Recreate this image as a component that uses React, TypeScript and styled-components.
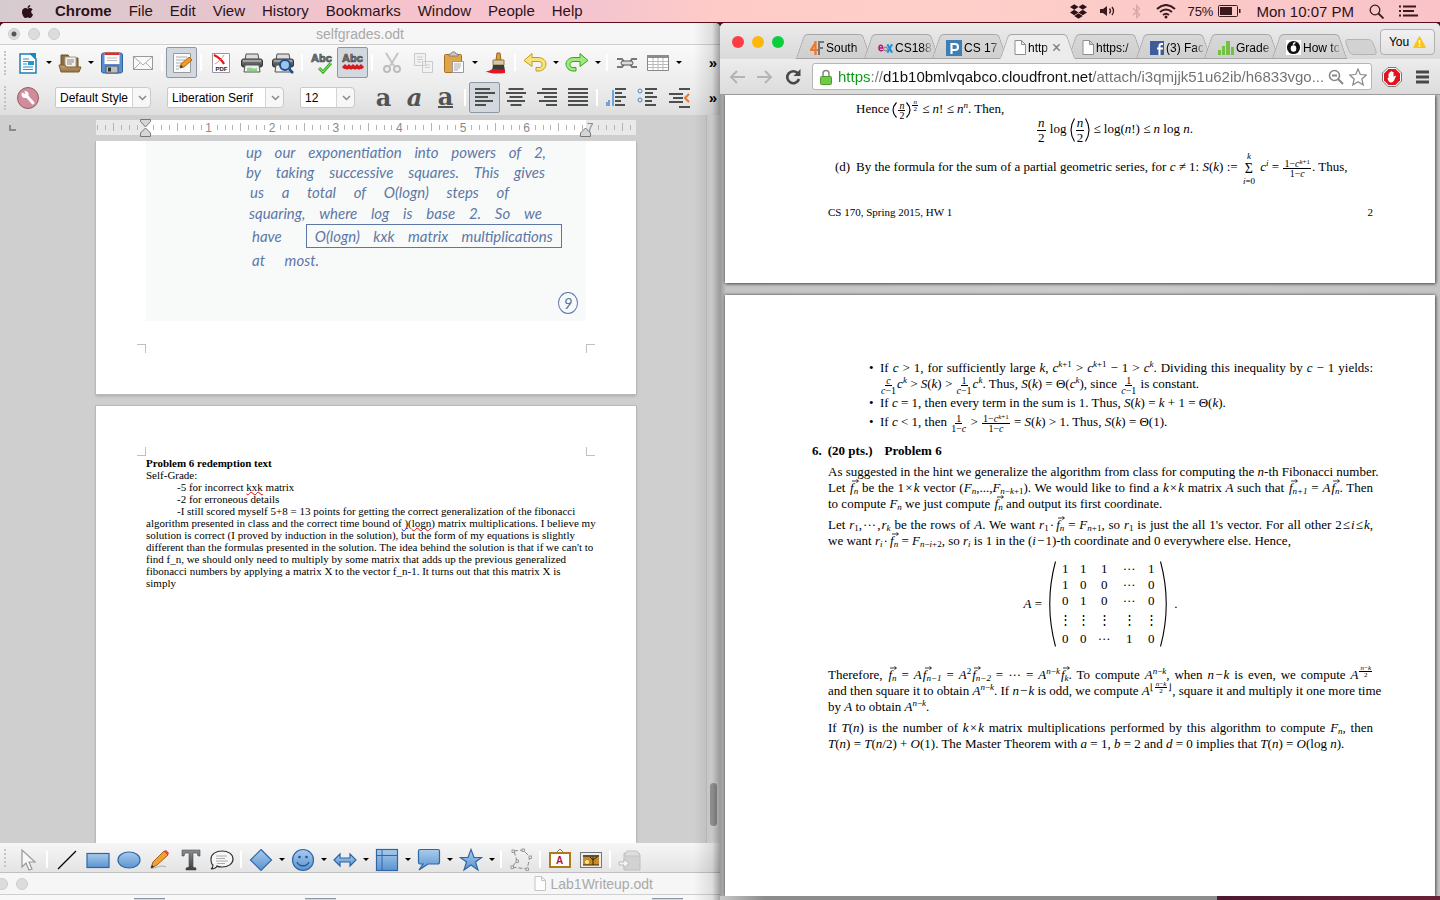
import React from "react";
import styled, { createGlobalStyle, css } from "styled-components";
import { FaApple, FaDropbox, FaBluetoothB } from "react-icons/fa";

const Global = createGlobalStyle`
  * { box-sizing: border-box; }
  html, body { margin: 0; padding: 0; }
  body { font-family: "Liberation Sans", Arial, sans-serif; color: #000; background: #4a1830; }
  button, select, input { font: inherit; color: inherit; margin: 0; padding: 0; }
  h2, p, ul { margin: 0; padding: 0; font: inherit; }
`;

const Desktop = styled.div`
  height: 100vh;
  display: flex;
  flex-direction: column;
  overflow: hidden;
  background: #4a1020;
`;

/* ---------- system menu bar ---------- */

const MenuBar = styled.header`
  height: 23px;
  flex: none;
  display: flex;
  align-items: center;
  padding: 0 22px 0 20px;
  border-bottom: 1px solid #5a0f1c;
  background: linear-gradient(90deg, #d6ccd0 0, #e2c6cd 12%, #f6c3cd 25%, #f5c5cf 42%, #ffcbc7 50%, #fecfc9 66%, #f9c3c8 100%);
  color: #2c1218;
  font-size: 15px;
`;
const MenuGroup = styled.nav`
  display: flex;
  align-items: center;
  gap: 17px;
  margin-left: 20px;
  flex: 1;
`;
const MenuItem = styled.button<{ $bold?: boolean }>`
  border: 0;
  background: none;
  line-height: 22px;
  white-space: nowrap;
  font-weight: ${(p) => (p.$bold ? 700 : 400)};
`;
const StatusGroup = styled.div<{ $tight?: boolean }>`
  display: flex;
  align-items: center;
  gap: ${(p) => (p.$tight ? 12 : 15)}px;
  white-space: nowrap;
`;
const Battery = styled.span`
  display: flex;
  align-items: center;
  gap: 5px;
  margin-left: -4px;
  font-size: 13px;
`;

const Windows = styled.main`
  flex: 1;
  min-height: 0;
  display: grid;
  grid-template-columns: 1fr 1fr;
`;

/* ---------- writer window ---------- */

const Writer = styled.section`
  position: relative;
  min-width: 0;
  display: flex;
  flex-direction: column;
  overflow: hidden;
  background: #cfcfcf;
  border-radius: 5px 5px 0 0;
  &::after {
    content: "";
    position: absolute;
    top: 0; right: 0; bottom: 0;
    width: 26px;
    pointer-events: none;
    background: linear-gradient(90deg, rgba(0,0,0,0), rgba(0,0,0,.1) 70%, rgba(0,0,0,.35));
  }
`;
const TitleBar = styled.div<{ $end?: boolean }>`
  height: 22px;
  flex: none;
  position: relative;
  display: flex;
  align-items: center;
  justify-content: ${(p) => (p.$end ? "flex-end" : "center")};
  padding-right: ${(p) => (p.$end ? 67 : 0)}px;
  gap: 5px;
  background: #f6f6f6;
  border-bottom: 1px solid #cfcfcf;
  color: #a9a9a9;
  font-size: 14px;
`;
const Lights = styled.div<{ $shift?: boolean }>`
  position: absolute;
  left: ${(p) => (p.$shift ? -24 : 8)}px;
  top: 5px;
  display: flex;
  gap: 8px;
`;
const Dim = styled.button<{ $dot?: boolean }>`
  width: 12px;
  height: 12px;
  border-radius: 50%;
  border: 1px solid #cdcdcd;
  background: ${(p) => (p.$dot ? "radial-gradient(circle, #555 0 2px, #dcdcdc 3px)" : "#dcdcdc")};
`;
const Toolbars = styled.div`
  flex: none;
  background: linear-gradient(#f9f9f9, #ececec 60%, #dedede);
`;
const Toolbar = styled.div<{ $bottom?: boolean }>`
  position: relative;
  height: ${(p) => (p.$bottom ? 30 : 35)}px;
  flex: none;
  display: flex;
  align-items: center;
  padding-left: 12px;
  ${(p) => p.$bottom && css`padding-top: 4px; background: linear-gradient(#f6f6f6, #e4e4e4); border-bottom: 1px solid #c0c0c0;`}
  &::before {
    content: "";
    position: absolute;
    left: 4px; top: 6px; bottom: 5px;
    border-left: 2px dotted #c4c4c4;
  }
`;
const ToolButton = styled.button<{ $on?: boolean }>`
  width: 31px;
  height: 31px;
  flex: none;
  display: grid;
  place-items: center;
  border: 1px solid ${(p) => (p.$on ? "#8d96a3" : "transparent")};
  border-radius: 2px;
  background: ${(p) => (p.$on ? "#d3d8de" : "none")};
  svg { display: block; }
`;
const Drop = styled.button`
  width: 11px;
  flex: none;
  display: grid;
  place-items: center;
  border: 0;
  background: none;
  &::before {
    content: "";
    border: 3px solid transparent;
    border-top-color: #000;
    border-bottom: 0;
  }
`;
const Sep = styled.span`
  flex: none;
  width: 2px;
  height: 17px;
  margin: 0 3px;
  background: #fff;
`;
const More = styled.button`
  margin-left: auto;
  margin-right: 3px;
  border: 0;
  background: none;
  font-size: 15px;
  line-height: 20px;
  font-weight: 700;
`;
const Picker = styled.span<{ $w: number; $gap: number }>`
  position: relative;
  flex: none;
  width: ${(p) => p.$w}px;
  margin-left: ${(p) => p.$gap}px;
  select {
    width: 100%;
    height: 21px;
    padding: 0 18px 0 4px;
    appearance: none;
    border: 1px solid #c9c9c9;
    border-radius: 2px 4px 4px 2px;
    background: linear-gradient(90deg, #fff calc(100% - 18px), #d4d4d4 calc(100% - 18px) calc(100% - 17px), #f7f7f7 calc(100% - 17px));
    font-size: 12px;
  }
  svg { position: absolute; right: 4px; top: 8px; pointer-events: none; }
`;
const FormatTools = styled.div`
  display: flex;
  align-items: center;
  margin-left: 13px;
`;
const Glyph = styled.span<{ $kind: "b" | "i" | "u" }>`
  font-family: "DejaVu Serif", serif;
  font-weight: 700;
  font-size: 24px;
  line-height: 18px;
  color: #505455;
  font-style: ${(p) => (p.$kind === "i" ? "italic" : "normal")};
  border-bottom: ${(p) => (p.$kind === "u" ? "2px solid #505455" : "0")};
`;
const DocArea = styled.div`
  flex: 1;
  min-height: 0;
  display: grid;
  grid-template-columns: 1fr 14px;
`;
const DocMain = styled.div`
  min-width: 0;
  display: flex;
  flex-direction: column;
  overflow: hidden;
`;
const RulerRow = styled.div`
  display: flex;
  flex: none;
  height: 26px;
  padding: 4px 0 0 9px;
  svg { flex: none; }
`;
const Pages = styled.div`
  flex: 1;
  min-height: 0;
  display: flex;
  flex-direction: column;
  gap: 12px;
  padding: 0 70px 0 96px;
  overflow: hidden;
`;
const Sheet = styled.article<{ $rest?: boolean }>`
  padding: 0 50px;
  background: #fff;
  box-shadow: 0 0 0 1px #b9b9b9, 0 2px 3px #a5a5a5;
  ${(p) => p.$rest ? css`flex: 1;` : css`flex: none;`}
`;
const Scan = styled.div`
  height: 180px;
  padding: 1px 23px 0 100px;
  background: #f8faf9;
  color: #5d77a6;
  font-family: Lato, sans-serif;
  font-style: italic;
  font-size: 15px;
`;
const Hand = styled.p<{ $w: number; $x?: number; $h?: number }>`
  display: flex;
  justify-content: space-between;
  width: ${(p) => p.$w}px;
  margin-left: ${(p) => p.$x || 0}px;
  line-height: ${(p) => p.$h || 21}px;
  white-space: nowrap;
`;
const HandRow = styled.div`
  display: flex;
  align-items: center;
  margin: 0 0 0 6px;
  gap: 24px;
  line-height: 20px;
`;
const Boxed = styled.span`
  display: flex;
  justify-content: space-between;
  width: 256px;
  padding: 0 8px;
  border: 1px solid #5d77a6;
  line-height: 22px;
`;
const PageNo = styled.div`
  width: 20px;
  margin: 20px -15px 0 auto;
  border: 1px solid #5d77a6;
  border-radius: 50%;
  text-align: center;
  line-height: 20px;
`;
const Corners = styled.div<{ $up?: boolean }>`
  display: flex;
  justify-content: space-between;
  margin: ${(p) => (p.$up ? "41px -9px 0" : "23px -9px 41px")};
  span {
    width: 9px;
    height: 9px;
    border: 0 solid #c0c0c0;
    ${(p) => (p.$up ? "border-bottom-width: 1px;" : "border-top-width: 1px;")}
  }
  span:first-child { border-right-width: 1px; }
  span:last-child { border-left-width: 1px; }
`;
const DocText = styled.div`
  font-family: "Liberation Serif", "Times New Roman", serif;
  font-size: 11px;
  line-height: 12px;
  white-space: nowrap;
  padding-top: 1px;
`;
const Strong = styled.h2`font-weight: 700;`;
const Tab1 = styled.p`padding-left: 31px;`;
const Typo = styled.span<{ $c?: string }>`
  text-decoration: underline wavy ${(p) => p.$c || "#e00000"} 1px;
  text-underline-offset: 0;
  text-decoration-skip-ink: none;
`;
const Track = styled.div`
  background: linear-gradient(90deg, #d6d6d6, #ececec);
  border-left: 1px solid #c4c4c4;
  display: flex;
  flex-direction: column;
  justify-content: flex-end;
  padding: 0 3px 17px;
  &::before {
    content: "";
    height: 43px;
    border-radius: 4px;
    background: #9c9c9c;
  }
`;
const NextBar = styled.div`
  flex: none;
  height: 5px;
  display: flex;
  align-items: flex-end;
  background: #f8f8f8;
  span { width: 31px; height: 2px; background: #d3d8de; border-top: 1px solid #8d96a3; }
  span:nth-child(1) { margin-left: 134px; }
  span:nth-child(2) { margin-left: 140px; }
  span:nth-child(3) { margin-left: auto; margin-right: 37px; }
`;

/* ---------- browser window ---------- */

const BrowserCol = styled.section`
  min-width: 0;
  min-height: 0;
  display: flex;
  flex-direction: column;
`;
const Browser = styled.div`
  flex: 1;
  min-height: 0;
  display: flex;
  flex-direction: column;
  border-radius: 5px 5px 0 0;
  overflow: hidden;
  background: #cbcbcb;
`;
const Below = styled.div`
  flex: none;
  height: 4px;
  background: linear-gradient(90deg, #c9c9c9, #8c8c8c 45px, #8c8c8c 69%, #4d1a31 69%, #6b2138);
`;
const Strip = styled.div`
  height: 36px;
  flex: none;
  display: flex;
  align-items: flex-end;
  background: linear-gradient(#ebebeb, #d9d9d9);
  position: relative;
`;
const Traffic = styled.div`
  display: flex;
  gap: 8px;
  align-self: center;
  margin: 2px 12px 0 12px;
`;
const Light = styled.button<{ $c: string }>`
  width: 12px;
  height: 12px;
  border: 0;
  border-radius: 50%;
  background: ${(p) => p.$c};
`;
const TabList = styled.div`display: flex;`;
const Tab = styled.button<{ $on?: boolean }>`
  position: relative;
  isolation: isolate;
  width: 68px;
  height: 25px;
  display: flex;
  align-items: center;
  gap: 2px;
  padding: 2px 1px 0 14px;
  border: 0;
  background: none;
  font-size: 12px;
  text-align: left;
  z-index: ${(p) => (p.$on ? 1 : 0)};
  &::before, &::after {
    content: "";
    position: absolute;
    z-index: -1;
    top: 0;
    bottom: 0;
    background: ${(p) => (p.$on ? "#ececec" : "linear-gradient(#d8d8d8, #cfcfcf)")};
    border-top: 1px solid #a6a6a6;
    border-bottom: 1px solid ${(p) => (p.$on ? "#ececec" : "#a6a6a6")};
  }
  &::before { left: 4px; right: 40%; transform: skewX(-19deg); border-left: 1px solid #a6a6a6; border-top-left-radius: 4px; }
  &::after { right: -3px; left: 40%; transform: skewX(19deg); border-right: 1px solid #a6a6a6; border-top-right-radius: 4px; }
  svg { flex: none; }
`;
const TabLabel = styled.span`
  flex: 1;
  min-width: 0;
  overflow: hidden;
  white-space: nowrap;
  mask-image: linear-gradient(90deg, #000 75%, rgba(0, 0, 0, .2));
`;
const Close = styled.span`font-size: 16px; line-height: 12px; color: #777; margin-right: 6px;`;
const NewTab = styled.button`
  width: 28px;
  height: 16px;
  margin: 0 0 4px 7px;
  border: 1px solid #b4b4b4;
  border-radius: 4px;
  background: #d2d2d2;
  transform: skewX(20deg);
`;
const You = styled.button`
  position: absolute;
  right: 5px;
  top: 6px;
  height: 26px;
  width: 55px;
  display: flex;
  align-items: center;
  justify-content: center;
  gap: 4px;
  border: 1px solid #b0b0b0;
  border-radius: 4px;
  background: linear-gradient(#f2f2f2, #e2e2e2);
  font-size: 12px;
`;
const NavBar = styled.div`
  height: 36px;
  flex: none;
  display: flex;
  align-items: center;
  gap: 10px;
  padding: 0 10px 0 8px;
  background: linear-gradient(#ececec, #dcdcdc);
  border-bottom: 1px solid #9a9a9a;
`;
const Nav = styled.button`
  border: 0;
  background: none;
  flex: none;
  display: grid;
  svg { display: block; }
`;
const Omni = styled.label`
  flex: 1;
  min-width: 0;
  height: 27px;
  display: flex;
  align-items: center;
  gap: 5px;
  padding: 0 4px 0 7px;
  background: #fff;
  border: 1px solid #b5b5b5;
  border-radius: 3px;
  svg { flex: none; }
  input {
    flex: 1;
    min-width: 0;
    height: 24px;
    border: 0;
    outline: 0;
    padding-left: 1px;
    font-size: 15px;
    background: linear-gradient(90deg, #0a9a12 33px, #777 33px 46px, #111 46px 255px, #6e6e6e 255px) text;
    -webkit-text-fill-color: transparent;
  }
`;
const Viewer = styled.div`
  flex: 1;
  min-height: 0;
  display: flex;
  flex-direction: column;
  gap: 12px;
  padding: 0 5px;
  background: linear-gradient(90deg, #9a9a9a, #c4c4c4 6px, #cbcbcb 50%, #c4c4c4);
  overflow: hidden;
`;
const Paper = styled.article<{ $rest?: boolean }>`
  background: #fff;
  box-shadow: 0 0 3px #555, 1px 1px 3px #666;
  padding: ${(p) => (p.$rest ? "65px 62px 0 103px" : "5px 62px 63px 103px")};
  flex: ${(p) => (p.$rest ? "1" : "none")};
  font-family: "Liberation Serif", "Times New Roman", serif;
  font-size: 13px;
  line-height: 16px;
`;
const Line = styled.span<{ $fill?: boolean }>`
  display: block;
  white-space: nowrap;
  ${(p) => p.$fill && css`text-align: justify; text-align-last: justify;`}
`;
const Para = styled.p<{ $top?: number }>`margin-top: ${(p) => p.$top || 5}px;`;
const Hence = styled.p`line-height: 18px; padding-left: 28px;`;
const Display = styled.p`line-height: 22px; padding-left: 28px; text-align: center;`;
const Part = styled.p`line-height: 24px; margin-top: 15px; padding-left: 7px; white-space: nowrap;`;
const PartNo = styled.span`display: inline-block; width: 21px;`;
const Foot = styled.footer`
  display: flex;
  justify-content: space-between;
  margin-top: 25px;
  font-size: 11px;
`;
const Bullets = styled.ul`
  list-style: none;
  padding-left: 41px;
  display: flex;
  flex-direction: column;
  gap: 3px;
  li { position: relative; padding-left: 11px; }
  li::before { content: "•"; position: absolute; left: 0; }
`;
const Heading = styled.h2`
  margin: 13px 0 0 -16px;
  font-weight: 700;
  display: flex;
  gap: 6px;
  span:last-child { margin-left: 6px; }
`;
const I = styled.i``;
const Sup = styled.sup<{ $tiny?: boolean }>`
  font-size: ${(p) => (p.$tiny ? 7 : 9)}px;
  line-height: 0;
  vertical-align: ${(p) => (p.$tiny ? 3 : 5)}px;
`;
const Sub = styled.sub`font-size: 9px; line-height: 0; vertical-align: -2px;`;
const FracBox = styled.span<{ $s: number }>`
  display: inline-flex;
  flex-direction: column;
  align-items: center;
  vertical-align: middle;
  margin: -8px 1px;
  font-size: ${(p) => p.$s}px;
  line-height: ${(p) => (p.$s > 11 ? 14 : p.$s > 8 ? 9 : 6)}px;
  > span:first-child { border-bottom: 1px solid #000; padding: 0 1px; }
`;
const SumBox = styled.span`
  display: inline-flex;
  flex-direction: column;
  align-items: center;
  vertical-align: middle;
  margin: -12px 2px;
  font-size: 9px;
  line-height: 10px;
  b { font-weight: 400; font-size: 14px; line-height: 15px; }
`;
const VecBox = styled.span`
  position: relative;
  font-style: italic;
  margin-left: 1px;
  svg { position: absolute; left: 2px; top: -1px; }
`;
const ParenSvg = styled.svg`
  vertical-align: middle;
  margin: -8px 0;
`;
const HiddenSvg = styled.svg`position: absolute;`;
const MatrixRow = styled.div`
  margin-top: 12px;
  display: flex;
  justify-content: center;
  align-items: center;
  gap: 6px;
`;
const Bracketed = styled.div`
  display: flex;
  align-items: center;
  svg { margin: 0; }
`;
const Matrix = styled.div`
  display: grid;
  grid-template-columns: 18px 18px 24px 26px 18px;
  grid-template-rows: 16px 16px 16px 22px 16px;
  place-items: center;
`;

const Frac = ({ n, d, s = 10 }: { n: React.ReactNode; d: React.ReactNode; s?: number }) => (
  <FracBox $s={s}><span>{n}</span><span>{d}</span></FracBox>
);
const Vec = ({ sub, v = "f" }: { sub: React.ReactNode; v?: string }) => (
  <VecBox>
    <svg width="7" height="4" viewBox="0 0 7 4"><path d="M0 2H6M4.500 .5 6.500 2 4.500 3.500" fill="none" stroke="#000" strokeWidth=".8" /></svg>
    {v}<Sub>{sub}</Sub>
  </VecBox>
);
const Paren = ({ h, right, w = 5 }: { h: number; right?: boolean; w?: number }) => (
  <ParenSvg width={w} height={h} viewBox={`0 0 ${w} ${h}`}>
    <path
      d={right ? `M.5 .5Q${w * 1.5} ${h / 2} .5 ${h - 0.5}` : `M${w - 0.5} .5Q${-w / 2} ${h / 2} ${w - 0.5} ${h - 0.5}`}
      fill="none" stroke="#000" strokeWidth="1.100"
    />
  </ParenSvg>
);

/* ---------- icons ---------- */

const Svg = ({ children, s = 24 }: { children: React.ReactNode; s?: number }) => (
  <svg width={s} height={s} viewBox="0 0 24 24" fill="none">{children}</svg>
);
const blue = { fill: "url(#blue)", stroke: "#2f67a5", strokeWidth: 1.2 };
const Defs = () => (
  <HiddenSvg width="0" height="0" aria-hidden="true">
    <defs>
      <linearGradient id="blue" x1="0" y1="0" x2="0" y2="1"><stop offset="0" stopColor="#a9cbee" /><stop offset="1" stopColor="#5b93d0" /></linearGradient>
      <linearGradient id="wood" x1="0" y1="0" x2="0" y2="1"><stop offset="0" stopColor="#c9a673" /><stop offset="1" stopColor="#93713f" /></linearGradient>
      <linearGradient id="metal" x1="0" y1="0" x2="0" y2="1"><stop offset="0" stopColor="#8b8e90" /><stop offset="1" stopColor="#3b3e40" /></linearGradient>
    </defs>
  </HiddenSvg>
);

const NewDoc = () => <Svg><path d="M4 3h11l5 5v14H4z" fill="#fff" stroke="#1c7fb5" strokeWidth="1.500" /><path d="M13 2h7v7z" fill="#1c86c0" /><path d="M7 8h6M7 10.500h5M7 13h4M7 16h10M7 18.500h10" stroke="#2d8fc4" /><path d="M12 10h6v4h-6z" fill="#2a95cc" /></Svg>;
const Open = () => <Svg><path d="M3 17V4h7l2 3h8v10z" fill="#8f6d3f" stroke="#6d522c" /><path d="M7 6h11v11H7z" fill="#f4f2ea" stroke="#a5a08f" /><path d="M9 9h7M9 11h7M9 13h5" stroke="#888" /><path d="M1 14h6l1 2h15l-2 5H3z" fill="url(#wood)" stroke="#7a5c31" /></Svg>;
const Save = () => <Svg><rect x="1.500" y="2" width="21" height="20" rx="2" fill="#5b8ed0" stroke="#315f9f" /><path d="M4.500 2h15v11h-15z" fill="#fdfdfd" /><path d="M4.500 1.500h15V4h-15z" fill="#e22b1f" /><path d="M7 7h10M7 9.500h10" stroke="#bbb" /><path d="M6 15h12v7H6z" fill="#b9bdc4" stroke="#50555e" /><path d="M8 16.500h3v4H8z" fill="#333" /></Svg>;
const Mail = () => <Svg><rect x="2.500" y="5.500" width="19" height="13" fill="#fafafa" stroke="#9a9a9a" /><path d="m3 6 9 8 9-8M3 18l6-6M21 18l-6-6" stroke="#aaa" /></Svg>;
const Edit = () => <Svg><path d="M3.500 2.500h17v19h-17z" fill="#fbfbfb" stroke="#999" /><path d="M6 6h11M6 9h9M6 12h6M6 15h4M6 18h3" stroke="#aaa" /><path d="m10 17 1-4 8-7 3 3-8 7z" fill="#f49a25" stroke="#8d5410" strokeWidth=".8" /><path d="m10 17 1-3 2 2z" fill="#333" /></Svg>;
const Pdf = () => <Svg><path d="M3.500 2.500h17v19h-17z" fill="#fff" stroke="#999" /><path d="M5 4c4 2 8 5 10 9" stroke="#e01818" strokeWidth="2.200" /><path d="M15 4c-2 4-5 6-9 9" stroke="#e88" strokeWidth="1" /><text x="6.500" y="20" fontSize="6" fontWeight="700" fill="#222" fontFamily="Liberation Sans">PDF</text></Svg>;
const printer = <><path d="M6 3h12l1 6H5z" fill="#ddd" stroke="#555" /><rect x="1.500" y="8" width="21" height="8" rx="2" fill="url(#metal)" stroke="#333" /><path d="M3 10h18" stroke="#ccc" /><path d="M5 14h14l1 7H4z" fill="#eee" stroke="#555" /></>;
const Print = () => <Svg>{printer}<path d="M7 17c4-2 6 2 10 0v3H7z" fill="#8cd28a" /></Svg>;
const Preview = () => <Svg>{printer}<circle cx="14" cy="14" r="5" fill="#9cc4ea" stroke="#1f4f92" strokeWidth="2" /><path d="m18 18 4 4" stroke="#1f4f92" strokeWidth="2.500" /></Svg>;
const abc = <text x="1" y="11" fontSize="11" fontWeight="700" fill="#7d8182" stroke="#44484a" strokeWidth=".7" fontFamily="Liberation Sans">Abc</text>;
const Spell = () => <Svg>{abc}<path d="m9 17 4 4 8-9" stroke="#3fae2a" strokeWidth="3" /><path d="m9 17 4 4 8-9" stroke="#9be66e" strokeWidth="1" /></Svg>;
const AutoSpell = () => <Svg>{abc}<path d="m2 17 2-2 2 2 2-2 2 2 2-2 2 2 2-2 2 2 2-2 2 2" stroke="#d71920" strokeWidth="3" /></Svg>;
const Cut = () => <Svg><path d="m6 2 8 13M18 2l-8 13" stroke="#c4c4c4" strokeWidth="2" /><circle cx="7" cy="18" r="3" stroke="#bdbdbd" strokeWidth="2" /><circle cx="17" cy="18" r="3" stroke="#bdbdbd" strokeWidth="2" /></Svg>;
const Copy = () => <Svg><path d="M3.500 2.500h11v12h-11zM11.500 10.500h10v11h-10z" fill="#f2f2f2" stroke="#c9c9c9" /><path d="M6 6h6M6 8.500h6M6 11h4M14 14h5M14 16.500h5" stroke="#ccc" /></Svg>;
const Paste = () => <Svg><rect x="2.500" y="3.500" width="17" height="18" rx="1" fill="#e0a44c" stroke="#a66f1f" /><path d="M7 5V3h2l1-2h3l1 2h2v2z" fill="#ccc" stroke="#777" strokeWidth=".8" /><path d="M10.500 10.500h11l0 11h-11z" fill="#fafafa" stroke="#999" /><path d="M12 13h7M12 15h7M12 17h6M12 19h4" stroke="#aaa" /></Svg>;
const Brush = () => <Svg><path d="M13 2h3l1 7h-5z" fill="#e0a040" stroke="#9a6418" /><path d="M9 9h11v5H9z" fill="#d8c8a0" stroke="#8a7a50" /><path d="M9 14h11l1 6H8z" fill="#3b3b3b" /><path d="M1 20c5 1 6-2 8-2l12 1v3c-8 1-14 1-20-2z" fill="#e01627" /></Svg>;
const undoPath = "M1 9.500 9 2.500v4h6c5 0 8 3 8 6.500s-3 7-7 7h-3v-3.500h3c2 0 3-1 3-3s-1-3-4-3H9v5z";
const Undo = () => <Svg><path d={undoPath} fill="#f6e37a" stroke="#c39a1e" /></Svg>;
const Redo = () => <Svg><path d={undoPath} transform="matrix(-1 0 0 1 24 0)" fill="#a0e97e" stroke="#36a51e" /></Svg>;
const Chain = () => <Svg><path d="M2 8h5l2 3M22 8h-5l-2 3M2 16h5l2-3M22 16h-5l-2-3" stroke="#777" strokeWidth="2" /><rect x="6" y="10" width="12" height="4" rx="2" fill="#ddd" stroke="#555" /></Svg>;
const TableIcon = () => <Svg><path d="M1.500 4.500h21v15h-21z" fill="#fff" stroke="#888" /><path d="M1 4h22v3H1z" fill="#8a8d8a" /><path d="M2 10.500h20M2 13.500h20M2 16.500h20M7 7v12M12 7v12M17 7v12" stroke="#bbb" /></Svg>;
const Wrench = () => <Svg><circle cx="12" cy="12" r="10.500" fill="#cf8c9b" stroke="#98596b" /><path d="m8 7 9 10" stroke="#fff" strokeWidth="3" strokeLinecap="round" /><circle cx="9" cy="8.500" r="3.500" fill="#fff" /><path d="m5 6 3-2 1.500 4z" fill="#cf8c9b" /></Svg>;
const rows = [4, 8, 12, 16, 20];
const Align = ({ k }: { k: "l" | "c" | "r" | "j" }) => {
  const w = k === "j" ? [20, 20, 20, 20, 20] : [15, 20, 13, 18, 11];
  return <Svg>{rows.map((y, i) => { const x = k === "c" ? 12 - w[i] / 2 : k === "r" ? 22 - w[i] : 2; return <path key={y} d={`M${x} ${y - 1}h${w[i]}`} stroke="#4b504c" strokeWidth="2" />; })}</Svg>;
};
const NumList = () => <Svg><path d="M4 14v6M8 4v16M2 16v4" stroke="#6ea3d8" strokeWidth="2" />{rows.map((y, i) => <path key={y} d={`M10 ${y - 1}h${[11, 7, 11, 6, 10][i]}`} stroke="#4b504c" strokeWidth="2" />)}</Svg>;
const BulList = () => <Svg><circle cx="4" cy="5" r="2" stroke="#4a86c5" /><circle cx="4" cy="14" r="2" stroke="#4a86c5" />{rows.map((y, i) => <path key={y} d={`M9 ${y - 1}h${[12, 8, 12, 7, 11][i]}`} stroke="#4b504c" strokeWidth="2" />)}</Svg>;
const Outdent = () => <Svg><path d="M12 3h11M2 8h14M6 12h10M2 16h14M12 21h11" stroke="#4b504c" strokeWidth="2" /><path d="m22 8-4 4 4 4" stroke="#e8772e" strokeWidth="2" /></Svg>;

const Pointer = () => <Svg><path d="M6 2v17l4-4 3 7 3-1-3-7h6z" fill="#f8f8f8" stroke="#9a9a9a" strokeWidth="1.200" /></Svg>;
const LineIcon = () => <Svg><path d="M3 21 21 3" stroke="#000" strokeWidth="1.200" /></Svg>;
const RectIcon = () => <Svg><rect x="1" y="5.500" width="22" height="14" {...blue} /></Svg>;
const Oval = () => <Svg><ellipse cx="12" cy="12" rx="11" ry="8" {...blue} /></Svg>;
const Pencil = () => <Svg><path d="M3 20c5 1 9-4 15-1" stroke="#aaa" /><path d="m3 20 2-6L16 3l4 4L9 17z" fill="#f4a030" stroke="#a0631a" /><path d="m16 3 2-1 3 3-1 2z" fill="#ee3f4d" /><path d="m3 20 1-3 2 2z" fill="#222" /></Svg>;
const TextIcon = () => <Svg><path d="M3 2h18v6h-2l-1-3h-4v14l3 1v2H7v-2l3-1V5H6L5 8H3z" fill="url(#metal)" stroke="#4a4e50" strokeWidth=".6" /></Svg>;
const Note = () => <Svg><path d="M12 3c6 0 11 3 11 8s-5 8-11 8c-2 0-4 0-5-1-1 2-4 3-6 3 2-1 2-3 2-4-2-1-2-3-2-6 0-5 5-8 11-8z" fill="#f6f6f6" stroke="#333" strokeWidth="1.200" /><path d="M6 8h11M6 10.500h9M6 13h12M7 15.500h8" stroke="#999" strokeWidth=".8" /></Svg>;
const Diamond = () => <Svg><path d="M12 1.500 22.500 12 12 22.500 1.500 12z" {...blue} /></Svg>;
const Smile = () => <Svg><circle cx="12" cy="12" r="10.500" {...blue} /><circle cx="8.500" cy="9" r="1.300" fill="#24558f" /><circle cx="15.500" cy="9" r="1.300" fill="#24558f" /><path d="M6 14c2 5 10 5 12 0" stroke="#24558f" strokeWidth="1.300" /></Svg>;
const Double = () => <Svg><path d="m1 12 6-6v4h10V6l6 6-6 6v-4H7v4z" {...blue} /></Svg>;
const Flow = () => <Svg><rect x="1.500" y="1.500" width="21" height="21" {...blue} /><path d="M7 2v20M2 7.500h20" stroke="#2f67a5" /></Svg>;
const Callout = () => <Svg><path d="M3 1.500h18q1.500 0 1.500 1.500v11q0 2-2 2H11l-9 6 4-6H3q-1.500 0-1.500-2V3q0-1.500 1.500-1.500z" {...blue} /></Svg>;
const Star = () => <Svg><path d="m12 1.500 3 8h7.500l-6 4.500 2.500 8-7-5-7 5 2.500-8-6-4.500H9z" {...blue} /></Svg>;
const Points = () => <Svg><path d="m5 3 9-1 7 7-3 12-15-2 5-6z" stroke="#888" strokeDasharray="4 2" />{[[4, 3], [14, 2], [21, 9], [18, 21], [3, 19], [8, 13]].map(([x, y]) => <rect key={x} x={x - 1} y={y - 1} width="2.500" height="2.500" fill="#eee" stroke="#888" strokeWidth=".8" />)}</Svg>;
const Frame = () => <Svg><path d="m9 4 3-3 3 3" stroke="#777" /><rect x="2" y="5" width="20" height="14" fill="#fff" stroke="#b07a18" strokeWidth="2" /><text x="8" y="16" fontSize="10" fontWeight="700" fill="#b5123e" fontFamily="Liberation Sans">A</text></Svg>;
const Picture = () => <Svg><rect x="1.500" y="4.500" width="21" height="15" fill="#eee" stroke="#777" /><path d="M4 7h16v10H4z" fill="#c98a23" /><path d="M4 7h16v2H4z" fill="#5d5030" /><circle cx="8" cy="14" r="2" fill="#ffe88a" /><path d="M14 17V9m-3 0 3 3 4-3M4 17h16" stroke="#33230c" /></Svg>;
const Extrude = () => <Svg><path d="M6 5h15l1 3v14H6z" fill="#d2d2d2" stroke="#c0c0c0" /><path d="m6 8 3-5h10l3 5z" fill="#dedede" stroke="#c4c4c4" /><path d="M1 14h5v-3l5 4.500L6 20v-3H1z" fill="#f4f4f4" stroke="#bbb" /></Svg>;

const FileIcon = ({ faded }: { faded?: boolean }) => (
  <svg width="12" height="15" viewBox="0 0 12 15"><path d="M1 .5h6.500l4 4v10H1zM7.500.5v4h4" fill="#fdfdfd" stroke={faded ? "#c4c4c4" : "#8e8e8e"} /></svg>
);

type Tool = { n: string; i: React.ReactNode; d?: boolean; on?: boolean } | "sep";
const renderTools = (tools: Tool[]) =>
  tools.map((t, k) =>
    t === "sep" ? <Sep key={k} /> : (
      <React.Fragment key={k}>
        <ToolButton $on={t.on} aria-label={t.n} aria-pressed={t.on}>{t.i}</ToolButton>
        {t.d && <Drop aria-label={`${t.n} options`} />}
      </React.Fragment>
    ));

const standard: Tool[] = [
  { n: "New", i: <NewDoc />, d: true }, { n: "Open", i: <Open />, d: true }, { n: "Save", i: <Save /> }, { n: "Mail", i: <Mail /> }, "sep",
  { n: "Edit mode", i: <Edit />, on: true }, "sep",
  { n: "Export PDF", i: <Pdf /> }, { n: "Print", i: <Print /> }, { n: "Preview", i: <Preview /> }, "sep",
  { n: "Spelling", i: <Spell /> }, { n: "Auto spellcheck", i: <AutoSpell />, on: true }, "sep",
  { n: "Cut", i: <Cut /> }, { n: "Copy", i: <Copy /> }, { n: "Paste", i: <Paste />, d: true }, { n: "Clone formatting", i: <Brush /> }, "sep",
  { n: "Undo", i: <Undo />, d: true }, { n: "Redo", i: <Redo />, d: true }, "sep",
  { n: "Hyperlink", i: <Chain /> }, { n: "Table", i: <TableIcon />, d: true },
];
const formatting: Tool[] = [
  { n: "Bold", i: <Glyph $kind="b">a</Glyph> }, { n: "Italic", i: <Glyph $kind="i">a</Glyph> }, { n: "Underline", i: <Glyph $kind="u">a</Glyph> }, "sep",
  { n: "Align left", i: <Align k="l" />, on: true }, { n: "Center", i: <Align k="c" /> }, { n: "Align right", i: <Align k="r" /> }, { n: "Justify", i: <Align k="j" /> }, "sep",
  { n: "Numbering", i: <NumList /> }, { n: "Bullets", i: <BulList /> }, { n: "Decrease indent", i: <Outdent /> },
];
const drawing: Tool[] = [
  { n: "Select", i: <Pointer /> }, "sep",
  { n: "Line", i: <LineIcon /> }, { n: "Rectangle", i: <RectIcon /> }, { n: "Ellipse", i: <Oval /> }, { n: "Freeform", i: <Pencil /> }, { n: "Text", i: <TextIcon /> }, { n: "Callouts", i: <Note /> }, "sep",
  { n: "Basic shapes", i: <Diamond />, d: true }, { n: "Symbol shapes", i: <Smile />, d: true }, { n: "Block arrows", i: <Double />, d: true }, { n: "Flowchart", i: <Flow />, d: true }, { n: "Callout shapes", i: <Callout />, d: true }, { n: "Stars", i: <Star />, d: true }, "sep",
  { n: "Points", i: <Points /> }, "sep",
  { n: "Fontwork", i: <Frame /> }, { n: "From file", i: <Picture /> }, "sep",
  { n: "Extrusion", i: <Extrude /> },
];

const Select = ({ label, value, w, gap }: { label: string; value: string; w: number; gap: number }) => (
  <Picker $w={w} $gap={gap}>
    <select aria-label={label} defaultValue={value}><option>{value}</option></select>
    <svg width="9" height="6" viewBox="0 0 9 6"><path d="m1 1 3.500 3.500L8 1" fill="none" stroke="#8a8a8a" strokeWidth="1.500" /></svg>
  </Picker>
);

const Ruler = () => {
  const ticks = [];
  for (let k = -6; k <= 61; k++) {
    if (k % 8 === 0) continue;
    const x = Math.round(49 + k * 7.95) + 0.5;
    if (x < 1 || x > 538) continue;
    const long = Math.abs(k % 4) === 0;
    ticks.push(<path key={k} d={`M${x} ${long ? 4 : 6}V${long ? 12 : 11}`} stroke="#b4b4b4" />);
  }
  return (
    <svg width="540" height="20" viewBox="0 0 540 20" aria-label="Ruler">
      <path d="M0 1h540v15H0z" fill="#e9e9e9" />
      <path d="M49 1h441v15H49z" fill="#fff" />
      {ticks}
      {[1, 2, 3, 4, 5, 6, 7].map((n) => <text key={n} x={49 + n * 63.6} y="13" fontSize="12" textAnchor="middle" fill="#8a8a8a">{n}</text>)}
      <path d="M44.500.5h10v2L49.500 8l-5-5.500zM49.500 9l5 5v3.500h-10V14zM489.500 9l5 5v3.500h-10V14z" fill="#d6d6d6" stroke="#777" />
    </svg>
  );
};

const tabs: { label: string; icon: React.ReactNode; on?: boolean }[] = [
  { label: "South", icon: <svg width="14" height="14" viewBox="0 0 14 14"><path d="M5.500 0v14M6 1 1 9h7" fill="none" stroke="#f0762b" strokeWidth="2.200" /><path d="M9 14V1h5M9 7h4" fill="none" stroke="#777" strokeWidth="2" /></svg> },
  { label: "CS188", icon: <svg width="15" height="12" viewBox="0 0 16 12"><path d="M1 6h4c0-4-4-4-4 0s4 3 4 2" fill="none" stroke="#b5177c" strokeWidth="1.500" /><circle cx="8" cy="7" r="2" fill="none" stroke="#888" strokeWidth="1.300" /><path d="m10 2 5 9m0-9-5 9" stroke="#1c92dd" strokeWidth="2.200" /></svg> },
  { label: "CS 17", icon: <svg width="16" height="16" viewBox="0 0 16 16"><path d="M0 0h16v16H0z" fill="#3d7fb5" /><path d="M5.500 14V4H9a3 3 0 0 1 0 6H6" fill="none" stroke="#fff" strokeWidth="2.200" /></svg> },
  { label: "http", icon: <FileIcon />, on: true },
  { label: "https:/", icon: <FileIcon /> },
  { label: "(3) Fac", icon: <svg width="14" height="14" viewBox="0 0 14 14"><path d="M0 0h14v14H0z" fill="#3f5c9a" /><path d="M9.500 14V5q0-2 2-2H13M7 7.500h6" fill="none" stroke="#fff" strokeWidth="2" /></svg> },
  { label: "Grade", icon: <svg width="16" height="14" viewBox="0 0 16 14"><path d="M0 9h3v5H0zM4 5h3v9H4zM8 0h4v14H8zM13 6h3v8h-3z" fill="#74c043" /></svg> },
  { label: "How to", icon: <svg width="15" height="15" viewBox="0 0 16 16"><path d="M0 0h16v16H0z" fill="#fff" /><circle cx="8" cy="8" r="7" fill="#111" /><ellipse cx="8" cy="9" rx="3" ry="3.500" fill="#fff" /><path d="M8 5c0-2 1-2 2-2" stroke="#fff" strokeWidth="1.500" fill="none" /></svg> },
];

const words = (s: string) => s.split(" ").map((w, i) => <span key={i}>{w}</span>);
const hair = "\u200A";
const nk = <><I>n</I>−<I>k</I></>;
const nkWide = <><I>n</I>{hair}−{hair}<I>k</I></>;
const kxk = <><I>k</I>{hair}×{hair}<I>k</I></>;
const geo = <Frac n={<>1−<I>c</I><Sup $tiny><I>k</I>+1</Sup></>} d={<>1−<I>c</I></>} />;

export default function App() {
  return (
    <Desktop>
      <Global />
      <Defs />
      <MenuBar>
        <FaApple size={15} />
        <MenuGroup>
          {["Chrome", "File", "Edit", "View", "History", "Bookmarks", "Window", "People", "Help"].map((m, i) => <MenuItem key={m} $bold={i === 0}>{m}</MenuItem>)}
        </MenuGroup>
        <StatusGroup>
          <StatusGroup $tight>
            <FaDropbox size={17} />
            <svg width="18" height="16" viewBox="0 0 18 16"><path d="M1 6h3l4-3v10l-4-3H1z" fill="#3a1a1e" /><path d="M10.500 5.500q2 2.500 0 5M13 4q3 4 0 8" fill="none" stroke="#3a1a1e" strokeWidth="1.300" /></svg>
            <FaBluetoothB size={15} color="#d9a5a8" />
            <svg width="20" height="15" viewBox="0 0 20 15"><path d="M1 5q9-8 18 0M4 8q6-5 12 0M7 11q3-2.500 6 0" fill="none" stroke="#3a1a1e" strokeWidth="2" /><circle cx="10" cy="13" r="1.500" fill="#3a1a1e" /></svg>
          </StatusGroup>
          <Battery>
            75%
            <svg width="23" height="12" viewBox="0 0 23 12"><rect x=".5" y=".5" width="19" height="11" rx="1" fill="none" stroke="#3a1a1e" /><path d="M2 2h12v8H2z" fill="#3a1a1e" /><path d="M21 4h1.500v4H21z" fill="#3a1a1e" /></svg>
          </Battery>
          <span>Mon 10:07 PM</span>
          <svg width="15" height="15" viewBox="0 0 15 15"><circle cx="6" cy="6" r="4.800" fill="none" stroke="#3a1a1e" strokeWidth="1.300" /><path d="m9.500 9.500 5 5" stroke="#3a1a1e" strokeWidth="1.800" /></svg>
          <svg width="19" height="12" viewBox="0 0 19 12"><path d="M0 1.500h2M4 1.500h13M0 6h2M4 6h11M0 10.500h2M4 10.500h15" stroke="#3a1a1e" strokeWidth="2" /></svg>
        </StatusGroup>
      </MenuBar>

      <Windows>
        <Writer>
          <TitleBar>
            <Lights><Dim $dot aria-label="Close" /><Dim aria-label="Minimize" /><Dim aria-label="Zoom" /></Lights>
            selfgrades.odt
          </TitleBar>
          <Toolbars>
            <Toolbar>{renderTools(standard)}<More aria-label="More tools">»</More></Toolbar>
            <Toolbar>
              <ToolButton aria-label="Styles"><Wrench /></ToolButton>
              <Select label="Paragraph style" value="Default Style" w={96} gap={12} />
              <Select label="Font name" value="Liberation Serif" w={117} gap={16} />
              <Select label="Font size" value="12" w={55} gap={16} />
              <FormatTools>{renderTools(formatting)}</FormatTools>
              <More aria-label="More formatting">»</More>
            </Toolbar>
          </Toolbars>
          <DocArea>
            <DocMain>
              <RulerRow>
                <svg width="87" height="16" viewBox="0 0 87 16"><path d="M1 6v5h6" fill="none" stroke="#8a8a8a" strokeWidth="2" /></svg>
                <Ruler />
              </RulerRow>
              <Pages>
                <Sheet>
                  <Scan>
                    <Hand $w={300} $h={20}>{words("up our exponentiation into powers of 2,")}</Hand>
                    <Hand $w={299} $h={20}>{words("by taking successive squares. This gives")}</Hand>
                    <Hand $w={259} $x={4}>{words("us a total of O(logn) steps of")}</Hand>
                    <Hand $w={293} $x={3}>{words("squaring, where log is base 2. So we")}</Hand>
                    <HandRow><span>have</span><Boxed>{words("O(logn) kxk matrix multiplications")}</Boxed></HandRow>
                    <Hand $w={67} $x={6} $h={24}>{words("at most.")}</Hand>
                    <PageNo>9</PageNo>
                  </Scan>
                  <Corners><span /><span /></Corners>
                </Sheet>
                <Sheet $rest>
                  <Corners $up><span /><span /></Corners>
                  <DocText>
                    <Strong>Problem 6 redemption text</Strong>
                    <p>Self-Grade:</p>
                    <Tab1>-5 for incorrect <Typo>kxk</Typo> matrix</Tab1>
                    <Tab1>-2 for erroneous details</Tab1>
                    <Tab1>-I still scored myself 5+8 = 13 points for getting the correct generalization of the fibonacci</Tab1>
                    <p>
                      algorithm presented in class and the correct time bound of<Typo $c="#1a1ae0"> )</Typo>(<Typo>logn</Typo>) matrix multiplications. I believe my<br />
                      solution is correct (I proved by induction in the solution), but the form of my equations is slightly<br />
                      different than the formulas presented in the solution. The idea behind the solution is that if we can't to<br />
                      find f_n, we should only need to multiply by some matrix that adds up the previous generalized<br />
                      fibonacci numbers by applying a matrix X to the vector f_n-1. It turns out that this matrix X is<br />
                      simply
                    </p>
                  </DocText>
                </Sheet>
              </Pages>
            </DocMain>
            <Track />
          </DocArea>
          <Toolbar $bottom>{renderTools(drawing)}</Toolbar>
          <TitleBar $end>
            <Lights $shift><Dim aria-label="Close" /><Dim aria-label="Minimize" /><Dim aria-label="Zoom" /></Lights>
            <FileIcon faded />Lab1Writeup.odt
          </TitleBar>
          <NextBar><span /><span /><span /></NextBar>
        </Writer>

        <BrowserCol>
          <Browser>
            <Strip>
              <Traffic><Light $c="#fc3d46" aria-label="Close" /><Light $c="#fdb70b" aria-label="Minimize" /><Light $c="#0bce3c" aria-label="Zoom" /></Traffic>
              <TabList>
                {tabs.map((t) => <Tab key={t.label} $on={t.on}>{t.icon}<TabLabel>{t.label}</TabLabel>{t.on && <Close>×</Close>}</Tab>)}
              </TabList>
              <NewTab aria-label="New tab" />
              <You>You<svg width="13" height="12" viewBox="0 0 13 12"><path d="M6.500.5 12.500 11.500H.5z" fill="#fcc419" stroke="#fcc419" /><path d="M6.500 4v4M6.500 9v1.500" stroke="#fff" strokeWidth="1.500" /></svg></You>
            </Strip>
            <NavBar>
              <Nav aria-label="Back"><svg width="18" height="16" viewBox="0 0 18 16"><path d="M17 8H3M9 2 3 8l6 6" fill="none" stroke="#b4b4b4" strokeWidth="2" /></svg></Nav>
              <Nav aria-label="Forward"><svg width="18" height="16" viewBox="0 0 18 16"><path d="M1 8h14M9 2l6 6-6 6" fill="none" stroke="#b4b4b4" strokeWidth="2" /></svg></Nav>
              <Nav aria-label="Reload"><svg width="18" height="16" viewBox="0 0 18 16"><path d="M14 4.500A6 6 0 1 0 15 10" fill="none" stroke="#484848" strokeWidth="2.600" /><path d="M16.500 0v7h-7z" fill="#484848" /></svg></Nav>
              <Omni>
                <svg width="12" height="16" viewBox="0 0 12 16"><path d="M3 8V4.500a3 3 0 0 1 6 0V8" fill="none" stroke="#888" strokeWidth="1.500" /><rect x=".5" y="7.500" width="11" height="8" rx="1" fill="#73c84a" stroke="#4b9e2c" /></svg>
                <input aria-label="Address" defaultValue="https://d1b10bmlvqabco.cloudfront.net/attach/i3qmjjk51u62ib/h6833vgo..." />
                <svg width="16" height="16" viewBox="0 0 16 16"><circle cx="6.500" cy="6.500" r="5" fill="none" stroke="#888" strokeWidth="1.600" /><path d="M4 6.500h5M10 10l5 5" stroke="#888" strokeWidth="2" /></svg>
                <svg width="18" height="18" viewBox="0 0 18 18"><path d="m9 1 2.300 5.500 6 .5-4.500 4 1.400 6L9 13.800 3.800 17l1.400-6L.7 7l6-.5z" fill="none" stroke="#888" strokeWidth="1.200" /></svg>
              </Omni>
              <Nav aria-label="Ad blocker"><svg width="20" height="20" viewBox="0 0 20 20"><path d="M6 .5h8L19.500 6v8L14 19.500H6L.5 14V6z" fill="#fff" stroke="#777" /><path d="M6.500 2h7L18 6.500v7L13.500 18h-7L2 13.500v-7z" fill="#e3131b" /><path d="M6.500 11V6.500h1V5h1.300v-.8h1.400V5h1.300v1.500V10l1.500-1.500 1 .7-2 4.300q-1 2-3 2-2.500 0-3.500-4.500z" fill="#fff" /></svg></Nav>
              <Nav aria-label="Menu"><svg width="18" height="14" viewBox="0 0 18 14"><path d="M4 2h13M4 7h13M4 12h13" stroke="#484848" strokeWidth="2.800" /></svg></Nav>
            </NavBar>
            <Viewer>
              <Paper>
                <Hence>Hence <Paren h={16} /><Frac n={<I>n</I>} d="2" s={10} /><Paren h={16} right /><Sup><Frac n={<I>n</I>} d="2" s={7} /></Sup> ≤ <I>n</I>! ≤ <I>n</I><Sup><I>n</I></Sup>. Then,</Hence>
                <Display><Frac n={<I>n</I>} d="2" s={13} /> log <Paren h={24} /><Frac n={<I>n</I>} d="2" s={13} /><Paren h={24} right /> ≤ log(<I>n</I>!) ≤ <I>n</I> log <I>n</I>.</Display>
                <Part>
                  <PartNo>(d)</PartNo>By the formula for the sum of a partial geometric series, for <I>c</I> ≠ 1: <I>S</I>(<I>k</I>) := <SumBox><I>k</I><b>Σ</b><span><I>i</I>=0</span></SumBox> <I>c</I><Sup><I>i</I></Sup> = {geo}. Thus,
                </Part>
                <Foot><span>CS 170, Spring 2015, HW 1</span><span>2</span></Foot>
              </Paper>
              <Paper $rest>
                <Bullets>
                  <li>
                    <Line $fill>If <I>c</I> &gt; 1, for sufficiently large <I>k</I>, <I>c</I><Sup><I>k</I>+1</Sup> &gt; <I>c</I><Sup><I>k</I>+1</Sup> − 1 &gt; <I>c</I><Sup><I>k</I></Sup>. Dividing this inequality by <I>c</I> − 1 yields:</Line>
                    <Line><Frac n={<I>c</I>} d={<><I>c</I>−1</>} /><I>c</I><Sup><I>k</I></Sup> &gt; <I>S</I>(<I>k</I>) &gt; <Frac n="1" d={<><I>c</I>−1</>} /><I>c</I><Sup><I>k</I></Sup>. Thus, <I>S</I>(<I>k</I>) = Θ(<I>c</I><Sup><I>k</I></Sup>), since <Frac n="1" d={<><I>c</I>−1</>} /> is constant.</Line>
                  </li>
                  <li><Line>If <I>c</I> = 1, then every term in the sum is 1. Thus, <I>S</I>(<I>k</I>) = <I>k</I> + 1 = Θ(<I>k</I>).</Line></li>
                  <li><Line>If <I>c</I> &lt; 1, then <Frac n="1" d={<>1−<I>c</I></>} /> &gt; {geo} = <I>S</I>(<I>k</I>) &gt; 1. Thus, <I>S</I>(<I>k</I>) = Θ(1).</Line></li>
                </Bullets>
                <Heading><span>6.</span><span>(20 pts.)</span><span>Problem 6</span></Heading>
                <Para>
                  <Line $fill>As suggested in the hint we generalize the algorithm from class for computing the <I>n</I>-th Fibonacci number.</Line>
                  <Line $fill>Let <Vec sub="n" /> be the 1{hair}×{hair}<I>k</I> vector (<I>F<Sub>n</Sub></I>,...,<I>F</I><Sub>{nk}+1</Sub>). We would like to find a {kxk} matrix <I>A</I> such that <Vec sub={<>n+1</>} /> = <I>A</I><Vec sub="n" />. Then</Line>
                  <Line>to compute <I>F<Sub>n</Sub></I> we just compute <Vec sub="n" /> and output its first coordinate.</Line>
                </Para>
                <Para>
                  <Line $fill>Let <I>r</I><Sub>1</Sub>,{hair}···{hair},{hair}<I>r<Sub>k</Sub></I> be the rows of <I>A</I>. We want <I>r</I><Sub>1</Sub>{hair}·{hair}<Vec sub="n" /> = <I>F</I><Sub><I>n</I>+1</Sub>, so <I>r</I><Sub>1</Sub> is just the all 1's vector. For all other 2{hair}≤{hair}<I>i</I>{hair}≤{hair}<I>k</I>,</Line>
                  <Line>we want <I>r<Sub>i</Sub></I>{hair}·{hair}<Vec sub="n" /> = <I>F</I><Sub><I>n</I>−<I>i</I>+2</Sub>, so <I>r<Sub>i</Sub></I> is 1 in the (<I>i</I>{hair}−{hair}1)-th coordinate and 0 everywhere else. Hence,</Line>
                </Para>
                <MatrixRow>
                  <span><I>A</I> =</span>
                  <Bracketed>
                    <Paren h={86} w={8} />
                    <Matrix>{"1 1 1 ··· 1 1 0 0 ··· 0 0 1 0 ··· 0 ⋮ ⋮ ⋮ ⋮ ⋮ 0 0 ··· 1 0".split(" ").map((c, i) => <span key={i}>{c}</span>)}</Matrix>
                    <Paren h={86} w={8} right />
                  </Bracketed>
                  <span>.</span>
                </MatrixRow>
                <Para $top={20}>
                  <Line $fill>Therefore, <Vec sub="n" /> = <I>A</I><Vec sub="n−1" /> = <I>A</I><Sup>2</Sup><Vec sub="n−2" /> = ··· = <I>A</I><Sup>{nk}</Sup><Vec sub="k" />. To compute <I>A</I><Sup>{nk}</Sup>, when {nkWide} is even, we compute <I>A</I><Sup><Frac n={nk} d="2" s={7} /></Sup></Line>
                  <Line $fill>and then square it to obtain <I>A</I><Sup>{nk}</Sup>. If {nkWide} is odd, we compute <I>A</I><Sup>⌊<Frac n={nk} d="2" s={7} />⌋</Sup>, square it and multiply it one more time</Line>
                  <Line>by <I>A</I> to obtain <I>A</I><Sup>{nk}</Sup>.</Line>
                </Para>
                <Para>
                  <Line $fill>If <I>T</I>(<I>n</I>) is the number of {kxk} matrix multiplications performed by this algorithm to compute <I>F<Sub>n</Sub></I>, then</Line>
                  <Line><I>T</I>(<I>n</I>) = <I>T</I>(<I>n</I>/2) + <I>O</I>(1). The Master Theorem with <I>a</I> = 1, <I>b</I> = 2 and <I>d</I> = 0 implies that <I>T</I>(<I>n</I>) = <I>O</I>(log <I>n</I>).</Line>
                </Para>
              </Paper>
            </Viewer>
          </Browser>
          <Below />
        </BrowserCol>
      </Windows>
    </Desktop>
  );
}
